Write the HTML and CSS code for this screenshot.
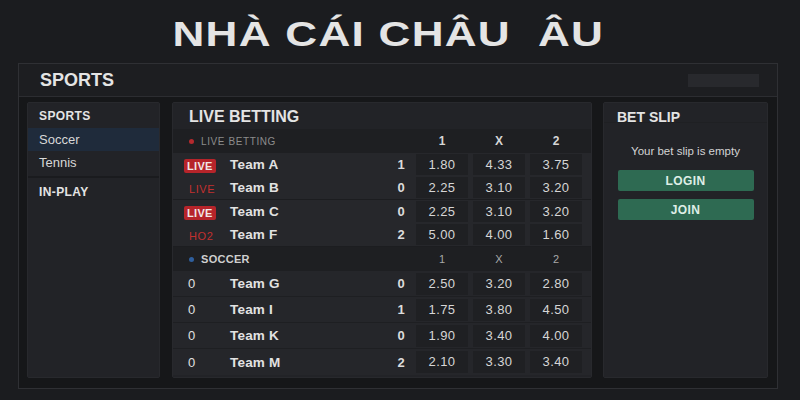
FILE: index.html
```html
<!DOCTYPE html>
<html lang="vi">
<head>
    <meta charset="UTF-8">
    <title>Nhà Cái Châu Âu</title>
    <link rel="stylesheet" href="styles.css">
</head>
<body>

    <div class="title-bar">
        <h1 class="title">NHÀ CÁI CHÂU&nbsp; ÂU</h1>
    </div>

    <div class="frame">
        <div class="frame-head">
            <span>SPORTS</span>
            <div class="search"></div>
        </div>

        <div class="frame-body">
            <!-- left menu -->
            <div class="panel sidebar">
                <div class="side-title">SPORTS</div>
                <div class="side-item active">Soccer</div>
                <div class="side-item">Tennis</div>
                <div class="side-title inplay">IN-PLAY</div>
            </div>

            <!-- live betting -->
            <div class="panel board">
                <div class="board-title">LIVE BETTING</div>

                <div class="row subhead">
                    <div class="label"><span class="dot red"></span>LIVE BETTING</div>
                    <div></div>
                    <div class="col">1</div>
                    <div class="col">X</div>
                    <div class="col">2</div>
                </div>

                <div class="group">
                    <div class="row">
                        <div><span class="badge">LIVE</span></div>
                        <div class="team">Team A</div>
                        <div class="score">1</div>
                        <div class="odd">1.80</div>
                        <div class="odd">4.33</div>
                        <div class="odd">3.75</div>
                    </div>
                    <div class="row">
                        <div><span class="tag">LIVE</span></div>
                        <div class="team">Team B</div>
                        <div class="score">0</div>
                        <div class="odd">2.25</div>
                        <div class="odd">3.10</div>
                        <div class="odd">3.20</div>
                    </div>
                </div>

                <div class="group">
                    <div class="row">
                        <div><span class="badge">LIVE</span></div>
                        <div class="team">Team C</div>
                        <div class="score">0</div>
                        <div class="odd">2.25</div>
                        <div class="odd">3.10</div>
                        <div class="odd">3.20</div>
                    </div>
                    <div class="row">
                        <div><span class="tag">HO2</span></div>
                        <div class="team">Team F</div>
                        <div class="score">2</div>
                        <div class="odd">5.00</div>
                        <div class="odd">4.00</div>
                        <div class="odd">1.60</div>
                    </div>
                </div>

                <div class="row subhead soccer">
                    <div class="label"><span class="dot blue"></span>SOCCER</div>
                    <div></div>
                    <div class="col">1</div>
                    <div class="col">X</div>
                    <div class="col">2</div>
                </div>

                <div class="row tall">
                    <div class="min">0</div>
                    <div class="team">Team G</div>
                    <div class="score">0</div>
                    <div class="odd">2.50</div>
                    <div class="odd">3.20</div>
                    <div class="odd">2.80</div>
                </div>
                <div class="row tall">
                    <div class="min">0</div>
                    <div class="team">Team I</div>
                    <div class="score">1</div>
                    <div class="odd">1.75</div>
                    <div class="odd">3.80</div>
                    <div class="odd">4.50</div>
                </div>
                <div class="row tall">
                    <div class="min">0</div>
                    <div class="team">Team K</div>
                    <div class="score">0</div>
                    <div class="odd">1.90</div>
                    <div class="odd">3.40</div>
                    <div class="odd">4.00</div>
                </div>
                <div class="row tall last">
                    <div class="min">0</div>
                    <div class="team">Team M</div>
                    <div class="score">2</div>
                    <div class="odd">2.10</div>
                    <div class="odd">3.30</div>
                    <div class="odd">3.40</div>
                </div>
            </div>

            <!-- bet slip -->
            <div class="panel slip">
                <div class="slip-title">BET SLIP</div>
                <p class="empty">Your bet slip is empty</p>
                <button class="btn">LOGIN</button>
                <button class="btn">JOIN</button>
            </div>
        </div>
    </div>

</body>
</html>
```

FILE: styles.css
```css
* {
    box-sizing: border-box;
}

body {
    margin: 0;
    font-family: "Liberation Sans", Arial, sans-serif;
    color: #e4e4e4;
    background-color: #1b1c1f;
    height: 400px;
    overflow: hidden;
}

.title-bar {
    height: 63px;
    text-align: center;
}

/* wide display heading */
.title {
    display: inline-block;
    margin: 0 23px 0 0;
    line-height: 68px;
    font-size: 35px;
    letter-spacing: 1px;
    color: #e4e4e4;
    transform: scaleX(1.26);
}

.frame {
    margin: 0 22px 0 18px;
    border: 1px solid #2f3034;
    background: #161719;
}

.frame-head {
    display: flex;
    align-items: center;
    justify-content: space-between;
    height: 33px;
    padding: 0 18px 0 21px;
    background: #1d1e21;
    border-bottom: 1px solid #2c2d31;
    font-size: 18px;
    font-weight: bold;
}

.search {
    width: 71px;
    height: 13px;
    background: #28292d;
}

.frame-body {
    display: flex;
    gap: 12px;
    padding: 5px 9px 10px 8px;
}

.panel {
    background: #222327;
    border: 1px solid #28292d;
    border-radius: 2px;
    height: 276px;
}

/* sidebar */
.sidebar {
    width: 133px;
}

.side-title {
    font-size: 12px;
    font-weight: bold;
    letter-spacing: 0.4px;
    padding: 6px 11px 5px;
}

.side-item {
    font-size: 13px;
    color: #d8d8d8;
    height: 23px;
    line-height: 23px;
    padding-left: 11px;
}

.side-item.active {
    background: #1f2b3b;
}

.inplay {
    border-top: 2px solid #1a1b1e;
    margin-top: 2px;
    padding-top: 7px;
}

/* live betting board */
.board {
    width: 420px;
    margin-right: -1px;
}

.board-title {
    font-size: 16px;
    font-weight: bold;
    height: 26px;
    line-height: 28px;
    padding-left: 16px;
}

.row {
    display: grid;
    grid-template-columns: 41px 1fr 20px 52px 52px 52px;
    column-gap: 5px;
    align-items: center;
    height: 23px;
    padding: 0 9px 0 11px;
}

.subhead {
    background: #1e1f22;
    height: 24px;
}

.subhead .label {
    grid-column: 1 / 3;
    font-size: 10px;
    letter-spacing: 0.6px;
    color: #8c8c8c;
    display: flex;
    align-items: center;
    padding-left: 5px;
}

.subhead .col {
    text-align: center;
    font-size: 12px;
    font-weight: bold;
    color: #d6d6d6;
}

.soccer .label {
    font-size: 11px;
    font-weight: bold;
    color: #cfcfcf;
    letter-spacing: 0.3px;
}

.soccer .col {
    font-weight: normal;
    color: #a8a8a8;
    font-size: 11px;
}

.dot {
    width: 5px;
    height: 5px;
    border-radius: 50%;
    margin-right: 7px;
}

.dot.red {
    background: #b52a2e;
}

.dot.blue {
    background: #2f5f9e;
}

.group {
    background: #26272b;
    border-bottom: 1px solid #1c1d20;
}

.badge {
    display: inline-block;
    background: #b6242a;
    color: #f0e6e6;
    font-size: 11px;
    font-weight: bold;
    padding: 1px 3px;
    border-radius: 2px;
    letter-spacing: 0.3px;
}

.tag {
    display: inline-block;
    color: #c2302f;
    font-size: 11px;
    padding-left: 5px;
    letter-spacing: 0.6px;
}

.team {
    font-size: 13.5px;
    font-weight: bold;
    color: #e2e2e2;
    letter-spacing: 0.2px;
}

.score {
    font-size: 13px;
    font-weight: bold;
    text-align: center;
    color: #dcdcdc;
}

.min {
    font-size: 13px;
    padding-left: 4px;
    color: #e0e0e0;
}

.odd {
    background: #1f2023;
    height: 21px;
    line-height: 22px;
    text-align: center;
    font-size: 13px;
    letter-spacing: 0.4px;
    color: #d6d6d6;
}

.tall {
    height: 26px;
    background: #25262a;
    border-bottom: 1px solid #1e1f22;
}

.tall .odd {
    height: 22px;
}

.tall.last {
    border-bottom: none;
}

/* bet slip */
.slip {
    width: 165px;
}

.slip-title {
    font-size: 14px;
    font-weight: bold;
    padding: 6px 13px 0;
    height: 20px;
    border-bottom: 1px solid #1f2023;
}

.empty {
    margin: 22px 0 13px;
    text-align: center;
    font-size: 11.5px;
    color: #d4d4d4;
}

.btn {
    display: block;
    width: 136px;
    height: 21px;
    margin: 0 auto 8px;
    border: none;
    border-radius: 2px;
    background: #2e6a52;
    color: #dfeee6;
    font-family: inherit;
    font-size: 12px;
    font-weight: bold;
    letter-spacing: 0.4px;
}
```
